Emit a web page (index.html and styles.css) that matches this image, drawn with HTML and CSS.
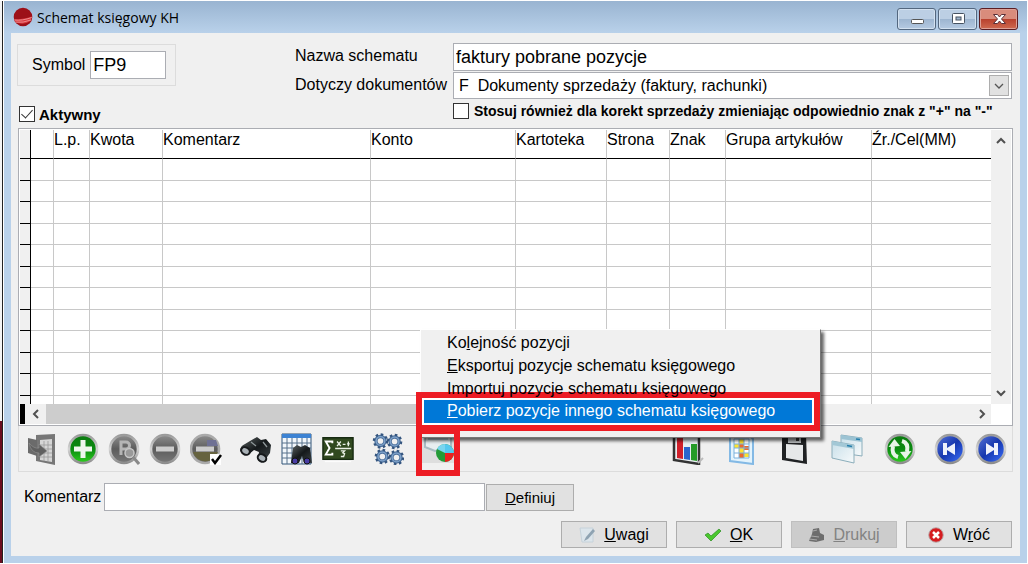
FILE: index.html
```html
<!DOCTYPE html>
<html lang="pl">
<head>
<meta charset="utf-8">
<title>Schemat księgowy KH</title>
<link rel="stylesheet" href="styles.css">
</head>
<body>
<svg class="defs" aria-hidden="true">
  <defs>
    <linearGradient id="green" x1="0" y1="0" x2="0" y2="1"><stop offset="0" stop-color="#0c7a10"/><stop offset=".5" stop-color="#0a8a10"/><stop offset="1" stop-color="#2fcf20"/></linearGradient>
    <linearGradient id="gray" x1="0" y1="0" x2="0" y2="1"><stop offset="0" stop-color="#8e8e8e"/><stop offset=".5" stop-color="#5c5c5c"/><stop offset="1" stop-color="#787878"/></linearGradient>
    <linearGradient id="blue" x1="0" y1="0" x2="1" y2="1"><stop offset="0" stop-color="#5a76d8"/><stop offset=".5" stop-color="#1536ae"/><stop offset="1" stop-color="#3f74ff"/></linearGradient>
    <linearGradient id="rim" x1="0" y1="0" x2="0" y2="1"><stop offset="0" stop-color="#9a9a9a"/><stop offset=".5" stop-color="#d4d4d4"/><stop offset="1" stop-color="#8c8c8c"/></linearGradient>
    <linearGradient id="dark" x1="0" y1="0" x2="1" y2="1"><stop offset="0" stop-color="#5d6464"/><stop offset=".5" stop-color="#15191b"/><stop offset="1" stop-color="#3d4446"/></linearGradient>
    <linearGradient id="glass" x1="0" y1="0" x2="1" y2="1"><stop offset="0" stop-color="#c7dfe9"/><stop offset="1" stop-color="#f7fafb"/></linearGradient>
    <g id="gear">
      <circle r="4.800" fill="none" stroke="#4d719d" stroke-width="3.6"/>
      <circle r="7" fill="none" stroke="#34557f" stroke-width="2.4" stroke-dasharray="2.75 2.75"/>
      <circle r="4.600" fill="none" stroke="#7fa3cb" stroke-width="1.4"/>
    </g>
  </defs>
</svg>
<div class="desktop">
  <div class="backdrop"></div>
  <main class="window">
    <header class="titlebar">
      <svg class="logo" viewBox="0 0 20 20" aria-hidden="true"><circle cx="10" cy="10" r="9.3" fill="#9d1018"/><path d="M1 12Q8 13 18.8 9.5Q18.5 12 17.5 14Q10 19 2.5 15Z" fill="#d8383e"/><path d="M1.5 13Q9 14 18.8 10.5M2.5 15.2Q10 16 18 13" fill="none" stroke="#f3a0a2" stroke-width=".8"/></svg>
      <h1>Schemat księgowy KH</h1>
      <div class="controls">
        <button type="button" class="control" aria-label="Minimalizuj"><svg viewBox="0 0 16 16"><rect x="2.5" y="8.500" width="12" height="4" rx="1" fill="#fff" stroke="#555"/></svg></button>
        <button type="button" class="control" aria-label="Maksymalizuj"><svg viewBox="0 0 16 16"><rect x="2.500" y="2.500" width="12" height="10" rx="1" fill="#fff" stroke="#465261"/><rect x="6" y="6" width="5" height="3" fill="#9fb5cd" stroke="#465261"/></svg></button>
        <button type="button" class="control close" aria-label="Zamknij"><svg viewBox="0 0 16 16"><path d="M2.500 3.500h4l2 2.500 2-2.500h4l-4 4.500 4 4.500h-4l-2-2.500-2 2.500h-4l4-4.500z" fill="#fff" stroke="#5b3038"/></svg></button>
      </div>
    </header>

    <form class="client">
      <section class="top">
        <div class="identity">
          <div class="group"><label for="symbol">Symbol</label><input class="text" id="symbol" value="FP9"></div>
          <label class="check"><input type="checkbox" checked>Aktywny</label>
        </div>
        <div class="details">
          <label for="name">Nazwa schematu</label>
          <input class="text" id="name" value="faktury pobrane pozycje">
          <label for="docs">Dotyczy dokumentów</label>
          <div class="combo">
            <select id="docs"><option>F&nbsp; Dokumenty sprzedaży (faktury, rachunki)</option></select>
            <span class="drop"><svg viewBox="0 0 12 12"><path d="M2 4l4 4 4-4" fill="none" stroke="#555" stroke-width="1.3"/></svg></span>
          </div>
          <label class="check wide"><input type="checkbox">Stosuj również dla korekt sprzedaży zmieniając odpowiednio znak z "+" na "-"</label>
        </div>
      </section>

      <section class="grid">
        <table>
          <colgroup><col class="c-mark"><col class="c-flag"><col class="c-lp"><col class="c-kwota"><col><col class="c-konto"><col class="c-kart"><col class="c-strona"><col class="c-znak"><col class="c-grupa"><col class="c-zr"></colgroup>
          <thead><tr><th></th><th></th><th>L.p.</th><th>Kwota</th><th>Komentarz</th><th>Konto</th><th>Kartoteka</th><th>Strona</th><th>Znak</th><th>Grupa artykułów</th><th>Źr./Cel(MM)</th></tr></thead>
          <tbody>
            <tr><td></td><td></td><td></td><td></td><td></td><td></td><td></td><td></td><td></td><td></td><td></td></tr>
            <tr><td></td><td></td><td></td><td></td><td></td><td></td><td></td><td></td><td></td><td></td><td></td></tr>
            <tr><td></td><td></td><td></td><td></td><td></td><td></td><td></td><td></td><td></td><td></td><td></td></tr>
            <tr><td></td><td></td><td></td><td></td><td></td><td></td><td></td><td></td><td></td><td></td><td></td></tr>
            <tr><td></td><td></td><td></td><td></td><td></td><td></td><td></td><td></td><td></td><td></td><td></td></tr>
            <tr><td></td><td></td><td></td><td></td><td></td><td></td><td></td><td></td><td></td><td></td><td></td></tr>
            <tr><td></td><td></td><td></td><td></td><td></td><td></td><td></td><td></td><td></td><td></td><td></td></tr>
            <tr><td></td><td></td><td></td><td></td><td></td><td></td><td></td><td></td><td></td><td></td><td></td></tr>
            <tr><td></td><td></td><td></td><td></td><td></td><td></td><td></td><td></td><td></td><td></td><td></td></tr>
            <tr><td></td><td></td><td></td><td></td><td></td><td></td><td></td><td></td><td></td><td></td><td></td></tr>
            <tr><td></td><td></td><td></td><td></td><td></td><td></td><td></td><td></td><td></td><td></td><td></td></tr>
            <tr class="rest"><td></td><td></td><td></td><td></td><td></td><td></td><td></td><td></td><td></td><td></td><td></td></tr>
          </tbody>
        </table>
        <div class="vscroll">
          <svg viewBox="0 0 12 12"><path d="M2 8l4-4 4 4" fill="none" stroke="#505050" stroke-width="2"/></svg>
          <svg viewBox="0 0 12 12"><path d="M2 4l4 4 4-4" fill="none" stroke="#505050" stroke-width="2"/></svg>
        </div>
        <div class="hscroll">
          <span class="split"></span>
          <svg viewBox="0 0 12 12"><path d="M8 2L4 6l4 4" fill="none" stroke="#505050" stroke-width="2"/></svg>
          <span class="thumb"></span>
          <svg viewBox="0 0 12 12"><path d="M4 2l4 4-4 4" fill="none" stroke="#505050" stroke-width="2"/></svg>
        </div>
      </section>

      <section class="toolbar">
        <div class="tools">
          <button type="button" class="tool" aria-label="Wybierz"><svg viewBox="0 0 32 32"><path d="M10 2l19-1v31l-19-4z" fill="#777"/><path d="M14 7l12-1v23l-12-2z" fill="#d5d5d5"/><path d="M14 12h12M14 16h12M14 20h12M14 24h12M18 8v20M22 8v20" stroke="#999" stroke-width=".8"/><path d="M2 5l9 2v16l-9-3z" fill="#6b6b6b"/><path d="M3 10q5 6 10 5v-4l8 7-8 6v-4q-8 0-10-10z" fill="#606060" stroke="#929292" stroke-width=".6"/></svg></button>
          <button type="button" class="tool" aria-label="Dodaj"><svg viewBox="0 0 32 32"><circle cx="16" cy="16" r="14" fill="url(#green)" stroke="url(#rim)" stroke-width="2.600"/><path d="M13.500 7h5v6.500H25v5h-6.500V25h-5v-6.500H7v-5h6.500z" fill="#eef7ee"/></svg></button>
          <button type="button" class="tool" aria-label="Podgląd"><svg viewBox="0 0 32 32"><circle cx="16" cy="16" r="14" fill="url(#gray)" stroke="url(#rim)" stroke-width="2.600"/><path d="M13 22V9h5a3.500 3.500 0 010 7h-5" fill="none" stroke="#b5b5b5" stroke-width="3"/><circle cx="21.500" cy="20" r="4.500" fill="#999" stroke="#c7c7c7" stroke-width="1.500"/><path d="M25 24l6 7" stroke="#898989" stroke-width="3"/></svg></button>
          <button type="button" class="tool" aria-label="Usuń"><svg viewBox="0 0 32 32"><circle cx="16" cy="16" r="14" fill="url(#gray)" stroke="url(#rim)" stroke-width="2.600"/><path d="M7 13.500h18v5H7z" fill="#ccc"/></svg></button>
          <button type="button" class="tool" aria-label="Usuń zaznaczone"><svg viewBox="0 0 32 32"><circle cx="15" cy="16" r="14" fill="url(#gray)" stroke="#aaa" stroke-width="2.600"/><path d="M3 19h25a13 13 0 01-25 0z" fill="#66633f"/><path d="M17 7h9l2 6H17z" fill="#6f7194"/><path d="M6 13.500h18v5H6z" fill="#ccc"/><path d="M20 21h11v11H20z" fill="#fff"/><path d="M22 26l3 4 6-8" fill="none" stroke="#000" stroke-width="2.500"/></svg></button>
        </div>
        <div class="tools">
          <button type="button" class="tool" aria-label="Szukaj"><svg viewBox="0 0 32 32"><path d="M10 8l7-4 4 3 5-1 5 6-1 8-5 7-7-2 1-6-5-2-6 5-8-4q0-5 5-7z" fill="url(#dark)"/><ellipse cx="5.500" cy="18" rx="4.500" ry="3.500" transform="rotate(30 5.500 18)" fill="#a9b1b6" stroke="#16191b" stroke-width="2"/><ellipse cx="22" cy="25" rx="4.500" ry="3.500" transform="rotate(30 22 25)" fill="#a9b1b6" stroke="#16191b" stroke-width="2"/><path d="M11 9l5 4M23 9l4 5" stroke="#8d9698" stroke-width="1.300"/></svg></button>
          <button type="button" class="tool" aria-label="Szukaj w tabeli"><svg viewBox="0 0 32 32"><path d="M1 1h29v30H1z" fill="#f2f7fb" stroke="#315578"/><path d="M1 1h29v4H1z" fill="#3d83d3"/><path d="M6 5v26M11 5v26M16 5v26M21 5v26M26 5v26M1 10h29M1 15h29M1 20h29M1 25h29" stroke="#57718a"/><path d="M12 15l4-3 4 2 4-2 5 3 2 15h-8l-2-7-3 7h-8z" fill="url(#dark)"/><circle cx="14" cy="28" r="3" fill="#493da5" stroke="#111"/><circle cx="26" cy="28" r="3" fill="#493da5" stroke="#111"/></svg></button>
          <button type="button" class="tool" aria-label="Formuła"><svg viewBox="0 0 34 32"><path d="M1 4h32v23H1z" fill="#30491f" stroke="#172b12" stroke-width="1.500"/><path d="M3 29h28v1H3z" fill="#fff"/><path d="M11 10V8H4l4 7-4 7h7v-2" fill="none" stroke="#fff" stroke-width="2"/><path d="M14 15.500h17M16 8l4 5m0-5l-4 5M22 11h3M28 8v5M26.500 10.500h3M20 18h4l-2 2 2 1-1 3h-3" fill="none" stroke="#e9efe5" stroke-width="1.400"/></svg></button>
        </div>
        <div class="tools">
          <button type="button" class="tool" aria-label="Ustawienia"><svg viewBox="0 0 34 34"><use href="#gear" x="9" y="8.500"/><use href="#gear" x="24" y="9"/><use href="#gear" x="11" y="25"/><use href="#gear" x="26" y="26"/></svg></button>
        </div>
        <div class="tools">
          <div class="anchor">
            <button type="button" class="tool pressed" aria-label="Operacje dodatkowe" aria-haspopup="menu"><svg viewBox="0 0 32 32"><path d="M3 1v15l10 4 16-3V1z" fill="#e8eef0" stroke="#a9bcc3" stroke-width="2"/><path d="M6 4h20v5H6z" fill="#b6cdd7"/><circle cx="23" cy="22" r="9" fill="#249b37"/><path d="M23 22V13a9 9 0 019 9z" fill="#55c8ef"/><path d="M23 22l-8-4a9 9 0 018-5z" fill="#79d5ef"/><path d="M23 22h9a9 9 0 01-9 9z" fill="#ec2020"/></svg></button>
            <ul class="menu" role="menu">
              <li role="menuitem">Ko<u>l</u>ejność pozycji</li>
              <li role="menuitem"><u>E</u>ksportuj pozycje schematu księgowego</li>
              <li role="menuitem">Importuj pozycje schematu księgowego</li>
              <li role="menuitem" class="active"><u>P</u>obierz pozycje innego schematu księgowego</li>
            </ul>
          </div>
        </div>
        <div class="tools spread">
          <button type="button" class="tool" aria-label="Wykres"><svg viewBox="0 0 32 32"><path d="M2 0l25 1v30L2 27z" fill="#e9eef1" stroke="#333" stroke-width="2.500"/><path d="M26 30l5-5" stroke="#bbb" stroke-width="2"/><path d="M5 2h6v24l-6-1z" fill="#d1202b"/><path d="M12 14h6v13l-6-1z" fill="#2b65cd"/><path d="M19 11h6v17l-6-1z" fill="#259b27"/></svg></button>
          <button type="button" class="tool" aria-label="Arkusz"><svg viewBox="0 0 32 32"><path d="M5 1h18l5 5v25L5 28z" fill="#e3f3fc" stroke="#83b9e5" stroke-width="2"/><path d="M9 6h15v19H9z" fill="#fff"/><path d="M14 6h5v5h-5zM9 11h5v4H9zM14 15h5v5h-5zM19 20h5v4h-5z" fill="#ffe32e"/><path d="M14 11h5v4h-5zM19 13h5v4h-5zM14 20h5v5h-5z" fill="#ee6a2a"/><path d="M9 6h15v19H9zM14 6v19M19 6v19M9 11h15M9 15h15M9 20h15" fill="none" stroke="#7ab1dc"/></svg></button>
          <button type="button" class="tool" aria-label="Zapisz"><svg viewBox="0 0 32 32"><path d="M4 1h24l1 30-25-4z" fill="#202224"/><path d="M10 1h13v9H10z" fill="#b9bdbf"/><path d="M18 2h3v6h-3z" fill="#333"/><path d="M8 11l17 1v16L8 25z" fill="#e6e8e9"/></svg></button>
          <button type="button" class="tool" aria-label="Okna"><svg viewBox="0 0 32 32"><path d="M10 2l21 3v18l-21-3z" fill="url(#glass)" stroke="#8caebb"/><path d="M10 2l21 3v4L10 6z" fill="#9cc3d3"/><path d="M1 8l22 4v18L1 25z" fill="url(#glass)" stroke="#8caebb"/><path d="M1 8l22 4v4L1 12z" fill="#a3c8d6"/><path d="M16 12.500l5 1M25 6l4 .6" stroke="#247eab" stroke-width="1.500"/></svg></button>
          <button type="button" class="tool" aria-label="Odśwież"><svg viewBox="0 0 32 32"><circle cx="16" cy="16" r="14" fill="url(#green)" stroke="url(#rim)" stroke-width="2.600"/><path d="M14 24Q7 22 9 13" fill="none" stroke="#e7f4e7" stroke-width="4"/><path d="M4.500 14l6-8 5.500 7z" fill="#e7f4e7"/><path d="M18 8q7 2 5 11" fill="none" stroke="#e7f4e7" stroke-width="4"/><path d="M27.500 18l-6 8-5.500-7z" fill="#e7f4e7"/></svg></button>
        </div>
        <div class="tools">
          <button type="button" class="tool" aria-label="Pierwszy"><svg viewBox="0 0 32 32"><circle cx="16" cy="16" r="14" fill="url(#blue)" stroke="url(#rim)" stroke-width="2.600"/><path d="M9 10h4v5l8-5v12l-8-5v5H9z" fill="#eef1fb"/></svg></button>
          <button type="button" class="tool" aria-label="Ostatni"><svg viewBox="0 0 32 32"><circle cx="16" cy="16" r="14" fill="url(#blue)" stroke="url(#rim)" stroke-width="2.600"/><path d="M23 10h-4v5l-8-5v12l8-5v5h4z" fill="#eef1fb"/></svg></button>
        </div>
      </section>

      <section class="comment">
        <label for="comment">Komentarz</label>
        <input class="text" id="comment">
        <button type="button" class="push small"><span><u>D</u>efiniuj</span></button>
      </section>

      <footer class="actions">
        <button type="button" class="push"><svg viewBox="0 0 16 16"><path d="M1 1h13v14H3z" fill="#dce5eb" stroke="#c6d2da"/><path d="M14 2l-7 8-2 4 4-2 7-8z" fill="#8fa3b2"/></svg><span><u>U</u>wagi</span></button>
        <button type="button" class="push"><svg viewBox="0 0 16 16"><path d="M0 8l3-2 3 3 8-7 2 2-10 10z" fill="#4ac82e" stroke="#2c8e22" stroke-width=".7"/></svg><span><u>O</u>K</span></button>
        <button type="button" class="push" disabled><svg viewBox="0 0 16 16"><path d="M5 2l6-1 1 5 4 2v5l-8 2-7-1 3-7z" fill="#6d6d6d"/><path d="M1 12l8 1M5 4l4-1M3 9l8 1" stroke="#aaa"/></svg><span><u>D</u>rukuj</span></button>
        <button type="button" class="push"><svg viewBox="0 0 16 16"><circle cx="8" cy="8" r="7.300" fill="#d51c20" stroke="#bcaeae"/><path d="M5 5l6 6m0-6l-6 6" stroke="#fff" stroke-width="2.500"/></svg><span>W<u>r</u>óć</span></button>
      </footer>
    </form>
  </main>
</div>
</body>
</html>
```
FILE: styles.css
```css
* { box-sizing: border-box; }
body { margin: 0; background: #fff; font-family: "Liberation Sans", Arial, sans-serif; font-size: 16px; color: #000; }
button, input, select { font: inherit; color: inherit; margin: 0; }
.defs { position: absolute; width: 0; height: 0; }
.desktop { display: flex; min-height: 563px; padding: 1px 1px 0 0; }
.backdrop { flex: none; width: 4px; border-right: 1px solid #fff; background: linear-gradient(90deg, transparent 2px, #222 2px), linear-gradient(#f4f4f4 420px, #6b0c20 420px); }
.window { flex: 1; min-width: 0; display: flex; flex-direction: column; padding: 0 7px 7px; background: linear-gradient(#99b4d1, #b9d1ea 32px); }

.titlebar { display: flex; align-items: center; height: 32px; padding: 0 2px; gap: 4px; }
.logo { width: 20px; height: 20px; }
.titlebar h1 { margin: 0; flex: 1; font: 14px "Open Sans", "Noto Sans", sans-serif; }
.controls { display: flex; gap: 2px; padding-top: 4px; }
.control { width: 39px; height: 22px; padding: 0; border: 1px solid #53677f; border-radius: 3px; box-shadow: inset 0 0 0 1px #d3e1f0; background: linear-gradient(#bccfe4 50%, #9db5d0 50%, #b5cae2); display: flex; align-items: center; justify-content: center; }
.control svg { width: 16px; height: 16px; }
.control.close { border-color: #5b1d22; box-shadow: inset 0 0 0 1px #dda096; background: linear-gradient(#d98c7c 50%, #b8402d 50%, #cf6a50); }

.client { flex: 1; display: flex; flex-direction: column; padding: 10px 7px 8px 6px; background: #f0f0f0; }
.top { display: flex; justify-content: space-between; gap: 119px; height: 85px; }
.identity { flex: none; width: 159px; display: flex; flex-direction: column; gap: 20px; }
.group { display: flex; align-items: center; gap: 5px; height: 42px; padding: 0 9px 0 14px; margin-top: 1px; border: 1px solid #dcdcdc; }
.group .text { flex: 1; }
.text { min-width: 0; height: 28px; padding: 0 2px; border: 1px solid #abadb3; background: #fff; font-size: 18px; }
.details { flex: 1; min-width: 0; display: grid; grid-template-columns: 158px minmax(0, 1fr); grid-template-rows: 28px 27px 1fr; row-gap: 1px; padding-right: 1px; }
.details > label { line-height: 26px; }
.combo { display: flex; min-width: 0; padding: 2px; border: 1px solid #abadb3; background: #fff; }
.combo select { flex: 1; min-width: 0; appearance: none; border: 0; padding: 0 3px; background: none; }
.drop { width: 20px; border: 1px solid #adadad; background: #e1e1e1; display: flex; align-items: center; justify-content: center; }
.drop svg { width: 12px; }
.check { display: flex; align-items: center; gap: 5px; height: 16px; font-size: 14px; font-weight: bold; white-space: nowrap; }
.check input { flex: none; appearance: none; display: grid; place-items: center; width: 16px; height: 16px; border: 1px solid #333; background: #fff; }
.check input:checked::before { content: ""; width: 5px; height: 10px; margin-bottom: 3px; border: solid #333; border-width: 0 1px 1px 0; transform: rotate(42deg); }
.identity .check { margin-left: 2px; font-size: 15px; gap: 4px; }
.details .wide { grid-column: 2; margin-top: 3px; line-height: 16px; }

.grid { display: grid; grid-template-columns: minmax(0, 1fr) 20px; grid-template-rows: auto 20px; padding: 1px; margin: 0 0 0 1px; border: 1px solid #abadb3; background: #fff; }
table { width: 100%; table-layout: fixed; border-collapse: separate; border-spacing: 0; }
th, td { padding: 0; border-right: 1px solid #c8c8c8; border-bottom: 1px solid #c8c8c8; }
th { height: 29px; padding: 1px 0 0; border-bottom-color: #000; text-align: left; vertical-align: top; font-weight: normal; white-space: nowrap; }
td { height: 21px; }
tbody tr:nth-child(odd) td { height: 22px; }
tbody .rest td { height: 8px; border-bottom: 0; }
th:first-child, td:first-child { background: #f0f0f0; border-right-color: #000; border-bottom-color: #000; }
th:last-child, td:last-child { border-right: 0; }
.c-mark { width: 11px; }
.c-flag { width: 23px; }
.c-lp { width: 36px; }
.c-kwota { width: 73px; }
.c-konto { width: 145px; }
.c-kart { width: 91px; }
.c-strona { width: 63px; }
.c-znak { width: 56px; }
.c-grupa { width: 146px; }
.c-zr { width: 119px; }
.vscroll { display: flex; flex-direction: column; justify-content: space-between; align-items: center; padding: 5px 0; background: #f0f0f0; }
.vscroll svg, .hscroll svg { flex: none; width: 12px; height: 12px; }
.hscroll { display: flex; align-items: center; background: #f0f0f0; padding-right: 3px; }
.hscroll .split { width: 5px; height: 100%; margin-right: 5px; background: #000; }
.hscroll .thumb { width: 65%; height: 100%; margin: 0 auto 0 4px; background: #cdcdcd; }

.toolbar { display: flex; align-items: center; gap: 18px; height: 46px; padding: 0 5px 0 7px; margin-left: 1px; border: 1px solid #dcdcdc; border-top: 0; }
.tools { display: flex; gap: 9px; }
.tools.spread { flex: 1; justify-content: flex-end; gap: 21px; }
.tool { width: 32px; height: 32px; padding: 0; border: 0; background: none; }
.tool svg { display: block; width: 32px; height: 32px; }
.pressed { background: #dedede; }
.anchor { position: relative; }
.anchor::after { content: ""; position: absolute; z-index: 3; inset: -3px -6px -9px; border: 6px solid #ed1c24; pointer-events: none; }
.menu { position: absolute; z-index: 2; left: -2px; bottom: 29px; width: 401px; margin: 0; padding: 2px 0 0 2px; height: 109px; list-style: none; border: 1px solid #fff; border-right-color: #777; border-bottom-color: #777; background: #f0f0f0; box-shadow: 3px 3px 3px #0009; }
.menu li { height: 23px; padding-left: 24px; line-height: 22px; white-space: nowrap; }
.menu .active { height: 39px; margin: -9px 0 0 -7px; padding-left: 25px; line-height: 26px; border: 6px solid #ed1c24; box-shadow: inset 0 0 0 2px #fff; background: #0078d7; color: #fff; }

.comment { display: flex; align-items: center; gap: 1px; margin: 11px 0 0 7px; }
.comment label { width: 79px; white-space: nowrap; }
.comment .text { width: 381px; }
.push { flex: none; display: flex; align-items: center; justify-content: center; gap: 9px; width: 106px; height: 27px; padding: 0; border: 1px solid #adadad; background: #e1e1e1; }
.push svg { width: 16px; height: 16px; }
.push.small { width: 88px; font-size: 15px; }
.push:disabled { background: #ccc; border-color: #bfbfbf; color: #838383; }
.actions { display: flex; justify-content: flex-end; gap: 9px; margin: auto 1px 0 0; }
```
